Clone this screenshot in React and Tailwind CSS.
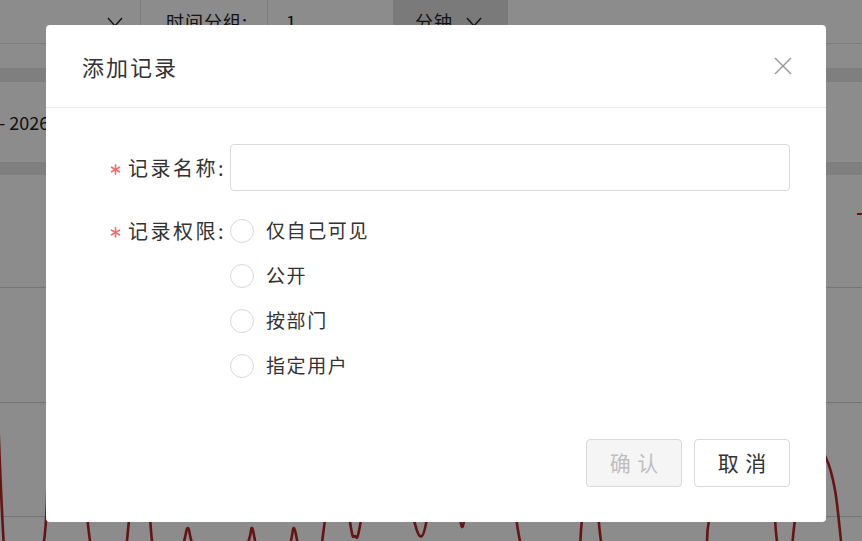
import React from 'react';

// background series, drawn under the mask
const wave = [
  [-6, 300], [5, 560], [22, 600], [44, 541], [50, 420], [64, 300], [78, 420], [90, 541],
  [104, 600], [122, 570], [129, 520], [139, 400], [147, 450], [152, 541], [166, 600],
  [183, 545], [188, 528], [194, 548], [220, 600], [247, 545], [252, 528], [257, 548],
  [275, 600], [290, 545], [294, 528], [299, 548], [313, 590], [325, 520], [337, 420],
  [350, 522], [355, 536], [361, 520], [382, 380], [410, 505], [422, 536], [432, 492],
  [450, 420], [462, 527], [474, 430], [500, 420], [520, 541], [540, 600], [575, 570],
  [582, 520], [592, 440], [601, 541], [620, 610], [700, 585], [709, 520], [740, 380],
  [770, 480], [777, 541], [787, 590], [795, 520], [810, 440], [826, 458], [835, 490],
  [841, 541], [846, 590],
];

function smoothPath(pts) {
  let d = `M ${pts[0][0]} ${pts[0][1]}`;
  for (let i = 0; i < pts.length - 1; i++) {
    const p0 = pts[i - 1] || pts[i];
    const p1 = pts[i];
    const p2 = pts[i + 1];
    const p3 = pts[i + 2] || p2;
    const c1x = p1[0] + (p2[0] - p0[0]) / 6;
    const c1y = p1[1] + (p2[1] - p0[1]) / 6;
    const c2x = p2[0] - (p3[0] - p1[0]) / 6;
    const c2y = p2[1] - (p3[1] - p1[1]) / 6;
    d += ` C ${c1x} ${c1y} ${c2x} ${c2y} ${p2[0]} ${p2[1]}`;
  }
  return d;
}

function Chevron() {
  return (
    <svg width="18" height="12" viewBox="0 0 18 12" fill="none" stroke="#222" strokeWidth="1.4">
      <polyline points="2,2 9,10 16,2" />
    </svg>
  );
}

function Required() {
  return (
    <svg width="11" height="11" viewBox="0 0 12 12" className="mr-[7px] mt-[3px] shrink-0" stroke="#f56c6c" strokeWidth="1.8" strokeLinecap="round">
      <line x1="6" y1="1" x2="6" y2="11" />
      <line x1="1.7" y1="3.5" x2="10.3" y2="8.5" />
      <line x1="10.3" y1="3.5" x2="1.7" y2="8.5" />
    </svg>
  );
}

function Radio({ label }) {
  return (
    <label className="flex items-center h-[45px]">
      <span className="w-6 h-6 rounded-full border border-[#d9d9d9] bg-white" />
      <span className="ml-3 text-[19px] tracking-[1.6px] text-[#333]">{label}</span>
    </label>
  );
}

export default function App() {
  return (
    <div className="relative w-[862px] h-[541px] overflow-hidden bg-white font-['Noto_Sans_CJK_SC','Noto_Sans',sans-serif]">
      {/* page behind the dialog */}
      <div className="flex h-[44px] items-center border-b border-[#e4e4e4] text-[18px] text-[#222]">
        <div className="flex w-[141px] h-full items-center justify-end pr-4 border-r border-[#e4e4e4]">
          <Chevron />
        </div>
        <div className="flex w-[127px] h-full items-center pl-[25px] border-r border-[#e4e4e4] tracking-[1px]">
          时间分组:
        </div>
        <div className="flex w-[125px] h-full items-center pl-[18px]">1</div>
        <div className="flex w-[115px] h-full items-center gap-3 pl-[22px] bg-[#dedede] tracking-[1px]">
          分钟 <Chevron />
        </div>
      </div>
      <div className="h-[24px]" />
      <div className="h-[14px] bg-[#e8e8e8]" />
      <div className="flex h-[80px] items-center text-[18px] text-[#222]">
        <span className="-ml-[1px]">- 2026-01-31</span>
      </div>
      <div className="h-[13px] bg-[#e8e8e8]" />
      <div className="relative h-[366px]">
        <div className="h-[113px] border-b border-[#d6d6d6]" />
        <div className="h-[115px] border-b border-[#d6d6d6]" />
        <div className="h-[114px] border-b border-[#d6d6d6]" />
        <svg className="absolute left-0 top-[-175px]" width="862" height="541" viewBox="0 0 862 541" fill="none">
          <path d={smoothPath(wave)} stroke="#b82525" strokeWidth="2.6" strokeLinejoin="round" />
          <line x1="857" y1="214" x2="866" y2="214" stroke="#b82525" strokeWidth="2" />
        </svg>
      </div>

      {/* mask + dialog */}
      <div className="absolute inset-0 bg-black/45 pl-[46px] pt-[25px]">
        <div className="w-[780px] h-[497px] rounded-[4px] bg-white flex flex-col">
          <div className="flex h-[83px] items-center justify-between pl-9 pr-[33px] border-b border-[#ebebeb]">
            <span className="text-[22px] tracking-[2px] text-[#333]">添加记录</span>
            <svg width="20" height="20" viewBox="0 0 20 20" fill="none" stroke="#999" strokeWidth="1.5">
              <line x1="2" y1="2" x2="18" y2="18" />
              <line x1="18" y1="2" x2="2" y2="18" />
            </svg>
          </div>

          <div className="flex-1 pt-[36px] pr-9">
            <div className="flex items-center">
              <div className="w-[184px] pr-[4px] flex items-center justify-end text-[20px] tracking-[2.5px] text-[#333]">
                <Required />
                <span>记录名称:</span>
              </div>
              <div className="flex-1 h-[47px] rounded-[4px] border border-[#d9d9d9]" />
            </div>
            <div className="flex mt-[17px]">
              <div className="w-[184px] h-[45px] flex items-center justify-end pr-[4px] text-[20px] tracking-[2.5px] text-[#333]">
                <Required />
                <span>记录权限:</span>
              </div>
              <div className="flex flex-col">
                <Radio label="仅自己可见" />
                <Radio label="公开" />
                <Radio label="按部门" />
                <Radio label="指定用户" />
              </div>
            </div>
          </div>

          <div className="flex justify-end gap-3 pr-9 pb-[35px]">
            <button className="w-24 h-12 rounded-[4px] border border-[#d9d9d9] bg-[#f5f5f5] text-[21px] tracking-[0.3em] pl-[0.3em] text-[#bfbfbf]">
              确认
            </button>
            <button className="w-24 h-12 rounded-[4px] border border-[#d9d9d9] bg-white text-[21px] tracking-[0.3em] pl-[0.3em] text-[#333]">
              取消
            </button>
          </div>
        </div>
      </div>
    </div>
  );
}
